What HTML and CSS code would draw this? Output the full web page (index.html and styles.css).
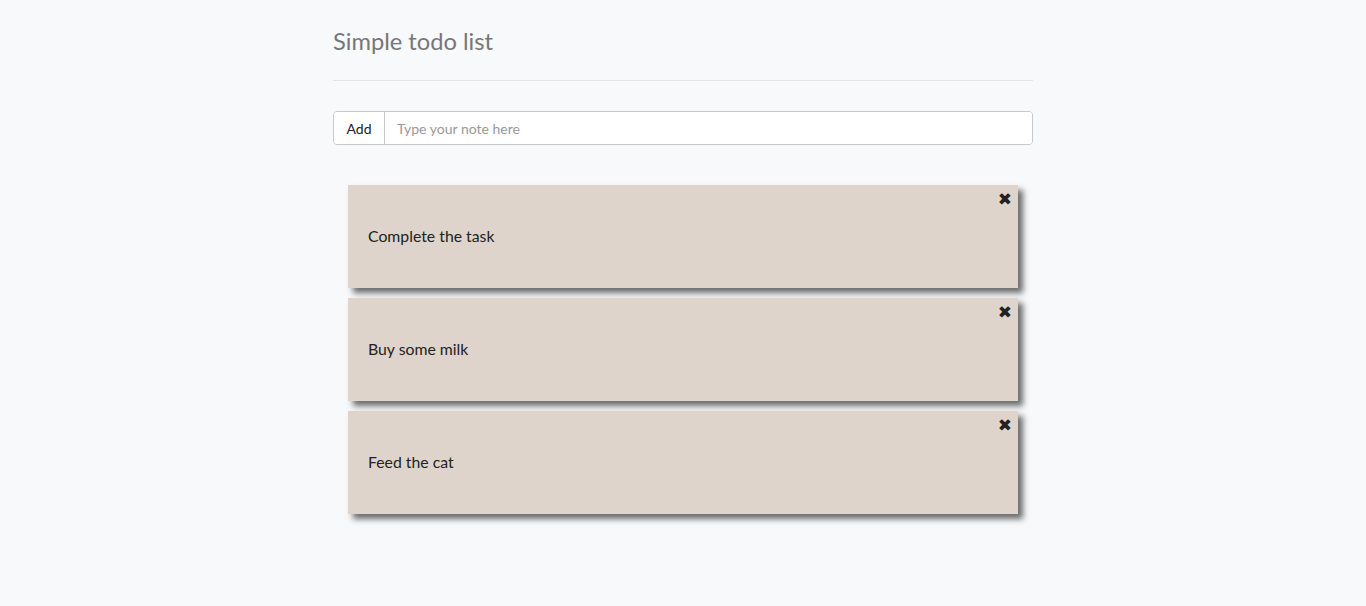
FILE: index.html
```html
<!DOCTYPE html>
<html>
<head>
<meta charset="utf-8">
<link rel="stylesheet" href="styles.css">
</head>
<body>
<div class="container">
  <h1 class="title">Simple todo list</h1>
  <hr class="divider">
  <div class="input-group">
    <button class="add-btn">Add</button>
    <input class="note-input" type="text" placeholder="Type your note here">
  </div>
  <ul class="notes">
    <li class="note"><span class="note-text">Complete the task</span><span class="close">&#x2716;</span></li>
    <li class="note"><span class="note-text">Buy some milk</span><span class="close">&#x2716;</span></li>
    <li class="note"><span class="note-text">Feed the cat</span><span class="close">&#x2716;</span></li>
  </ul>
</div>
</body>
</html>
```
FILE: styles.css
```css
* { box-sizing: border-box; }
html, body { margin: 0; padding: 0; }
html { background: #f7f9fb; }
body {
  background: #f7f9fb;
  font-family: Lato, "Open Sans", sans-serif;
  color: #222;
  min-height: 606px;
}
.container {
  width: 700px;
  margin: 0 auto;
  padding: 26px 0 60px;
}
.title {
  margin: 0;
  font-size: 23.7px;
  font-weight: 400;
  color: #777;
  line-height: 30px;
}
.divider {
  margin: 24px 0 30px;
  border: 0;
  border-top: 1px solid #e3e4e6;
}
.input-group {
  display: flex;
  height: 34px;
  border: 1px solid #c8c8c8;
  border-radius: 4px;
  background: #fff;
  overflow: hidden;
}
.add-btn {
  width: 51px;
  border: 0;
  border-right: 1px solid #c8c8c8;
  background: #fff;
  font-family: inherit;
  font-size: 14px;
  color: #222;
  padding: 0;
}
.note-input {
  flex: 1;
  border: 0;
  padding: 0 12px;
  font-family: inherit;
  font-size: 14px;
  outline: none;
}
.note-input::placeholder { color: #999; }
.notes {
  list-style: none;
  margin: 40px 0 0;
  padding: 0 15px;
  display: flex;
  flex-direction: column;
  gap: 10px;
}
.note {
  position: relative;
  width: 670px;
  height: 103px;
  background: #dfd4cb;
  box-shadow: 5px 5px 6px rgba(30,30,30,0.65);
  display: flex;
  align-items: center;
  padding: 0 20px 2px;
  font-size: 15.8px;
  color: #222;
}
.close {
  position: absolute;
  top: 4px;
  right: 6px;
  font-size: 17px;
  color: #222;
  font-family: "DejaVu Sans", sans-serif;
}
```
